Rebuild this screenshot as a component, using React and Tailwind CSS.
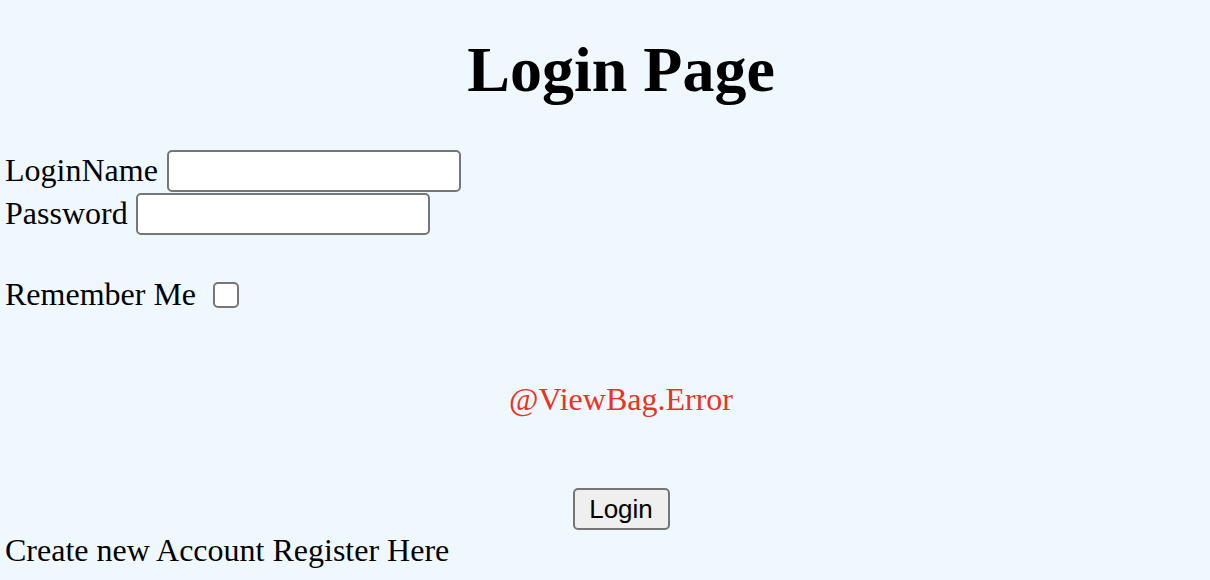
import React from "react";

const App = () => {
  return (
    <div className="min-h-[580px] bg-[#f0f8ff] text-black font-['Liberation_Serif',serif] text-[32px] leading-[37px] pl-[5px] pt-[33px]">
      <h1 className="h-[74px] text-[64px] leading-[74px] font-bold text-center pl-[27px]">
        Login Page
      </h1>

      <form onSubmit={(e) => e.preventDefault()}>
        <div className="mt-[42px] flex items-center h-[43px]">
          <span>LoginName</span>
          <input
            type="text"
            className="ml-[9px] w-[294px] h-[42px] bg-white border-2 border-[#767676] rounded-[5px]"
          />
        </div>
        <div className="flex items-center h-[43px]">
          <span>Password</span>
          <input
            type="password"
            className="ml-[8px] w-[294px] h-[42px] bg-white border-2 border-[#767676] rounded-[5px]"
          />
        </div>

        <div className="mt-[41px] flex items-center h-[37px]">
          <span>Remember Me</span>
          <span className="ml-[17px] w-[26px] h-[26px] bg-white border-2 border-[#767676] rounded-[5px]" />
        </div>

        <p className="mt-[68px] text-center pl-[27px] text-[#ea3323]">
          @ViewBag.Error
        </p>

        <div className="mt-[70px] flex justify-center pl-[27px]">
          <button
            type="submit"
            className="w-[97px] h-[42px] bg-[#efefef] border-2 border-[#767676] rounded-[5px] font-['Liberation_Sans',sans-serif] text-[26px] leading-none"
          >
            Login
          </button>
        </div>

        <p className="mt-[2px]">Create new Account Register Here</p>
      </form>
    </div>
  );
};

export default App;
